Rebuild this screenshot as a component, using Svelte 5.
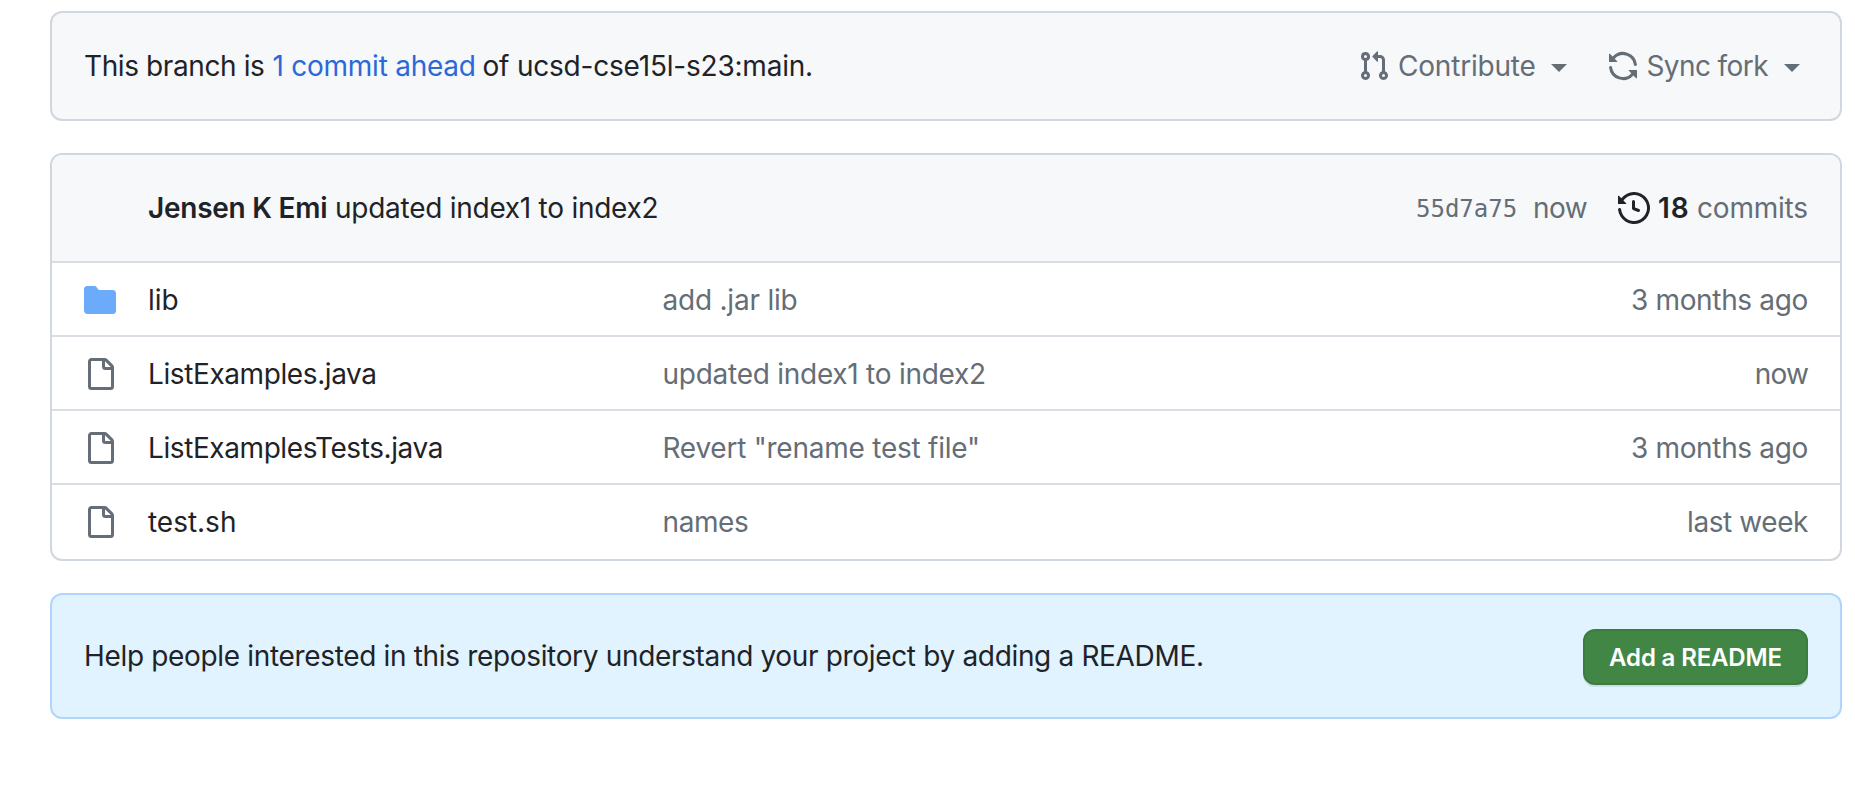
<script>
  const files = [
    { dir: true, name: 'lib', nameLs: 0, msg: 'add .jar lib', msgLs: -0.22, age: '3 months ago', ageLs: -0.34 },
    { dir: false, name: 'ListExamples.java', nameLs: -0.4, msg: 'updated index1 to index2', msgLs: -0.26, age: 'now', ageLs: -0.8 },
    { dir: false, name: 'ListExamplesTests.java', nameLs: -0.41, msg: 'Revert "rename test file"', msgLs: -0.24, age: '3 months ago', ageLs: -0.34 },
    { dir: false, name: 'test.sh', nameLs: -0.02, msg: 'names', msgLs: -0.4, age: 'last week', ageLs: -0.42 }
  ];
</script>

<main>
  <section class="box branch">
    <p class="compare"><span class="lead">This branch is</span><a class="ahead" href="#compare">1 commit ahead</a><span class="base">of ucsd-cse15l-s23:main.</span></p>
    <div class="action contribute">
      <svg class="icon" viewBox="0 0 16 16"><path d="M1.5 3.25a2.25 2.25 0 1 1 3 2.122v5.256a2.251 2.251 0 1 1-1.5 0V5.372A2.25 2.25 0 0 1 1.5 3.25Zm5.677-.177L9.573.677A.25.25 0 0 1 10 .854V2.5h1A2.5 2.5 0 0 1 13.5 5v5.628a2.251 2.251 0 1 1-1.5 0V5a1 1 0 0 0-1-1h-1v1.646a.25.25 0 0 1-.427.177L7.177 3.427a.25.25 0 0 1 0-.354ZM3.75 2.5a.75.75 0 1 0 0 1.5.75.75 0 0 0 0-1.5Zm0 9.5a.75.75 0 1 0 0 1.5.75.75 0 0 0 0-1.5Zm8.25.75a.75.75 0 1 0 1.5 0 .75.75 0 0 0-1.5 0Z" /></svg>
      <span class="label">Contribute</span>
      <i class="caret"></i>
    </div>
    <div class="action sync">
      <svg class="icon" viewBox="0 0 16 16"><path d="M1.705 8.005a.75.75 0 0 1 .834.656 5.5 5.5 0 0 0 9.592 2.97l-1.204-1.204a.25.25 0 0 1 .177-.427h3.646a.25.25 0 0 1 .25.25v3.646a.25.25 0 0 1-.427.177l-1.38-1.38A7.002 7.002 0 0 1 1.05 8.84a.75.75 0 0 1 .656-.834ZM8 2.5a5.487 5.487 0 0 0-4.131 1.869l1.204 1.204A.25.25 0 0 1 4.896 6H1.25A.25.25 0 0 1 1 5.75V2.104a.25.25 0 0 1 .427-.177l1.38 1.38A7.002 7.002 0 0 1 14.95 7.16a.75.75 0 0 1-1.49.178A5.5 5.5 0 0 0 8 2.5Z" /></svg>
      <span class="label">Sync fork</span>
      <i class="caret"></i>
    </div>
  </section>

  <section class="box listing">
    <header>
      <strong class="author">Jensen K Emi</strong>
      <span class="subject">updated index1 to index2</span>
      <span class="hash">55d7a75</span>
      <span class="when">now</span>
      <svg class="icon history" viewBox="0 0 16 16"><path d="m.427 1.927 1.215 1.215a8.002 8.002 0 1 1-1.6 5.685.75.75 0 1 1 1.493-.154 6.5 6.5 0 1 0 1.18-4.458l1.358 1.358A.25.25 0 0 1 3.896 6H.25A.25.25 0 0 1 0 5.75V2.104a.25.25 0 0 1 .427-.177ZM7.75 4a.75.75 0 0 1 .75.75v2.992l2.028.812a.75.75 0 0 1-.557 1.392l-2.5-1A.751.751 0 0 1 7 8.25v-3.5A.75.75 0 0 1 7.75 4Z" /></svg>
      <strong class="count">18</strong>
      <span class="commits">commits</span>
    </header>
    {#each files as f}
      <div class="row">
        {#if f.dir}
          <svg class="icon folder" viewBox="0 0 16 16"><path d="M1.75 1A1.75 1.75 0 0 0 0 2.75v10.5C0 14.216.784 15 1.75 15h12.5A1.75 1.75 0 0 0 16 13.25v-8.5A1.75 1.75 0 0 0 14.25 3H7.5a.25.25 0 0 1-.2-.1l-.9-1.2C6.07 1.26 5.55 1 5 1H1.75Z" /></svg>
        {:else}
          <svg class="icon" viewBox="0 0 16 16"><path d="M2 1.75C2 .784 2.784 0 3.75 0h6.586c.464 0 .909.184 1.237.513l2.914 2.914c.329.328.513.773.513 1.237v9.586A1.75 1.75 0 0 1 13.25 16h-9.5A1.75 1.75 0 0 1 2 14.25Zm1.75-.25a.25.25 0 0 0-.25.25v12.5c0 .138.112.25.25.25h9.5a.25.25 0 0 0 .25-.25V6h-2.75A1.75 1.75 0 0 1 9 4.25V1.5Zm6.75.062V4.25c0 .138.112.25.25.25h2.688l-.011-.013-2.914-2.914-.013-.011Z" /></svg>
        {/if}
        <span class="name" style:letter-spacing="{f.nameLs}px">{f.name}</span>
        <span class="msg" style:letter-spacing="{f.msgLs}px">{f.msg}</span>
        <span class="age" style:letter-spacing="{f.ageLs}px">{f.age}</span>
      </div>
    {/each}
  </section>

  <section class="box readme">
    <p>Help people interested in this repository understand your project by adding a README.</p>
    <button>Add a README</button>
  </section>
</main>

<style>
  :global(body) { background: #fff; }
  main {
    box-sizing: border-box;
    width: 1855px;
    height: 794px;
    padding: 11px 13px 0 50px;
    display: flex;
    flex-direction: column;
    gap: 32px;
    font: 28px/42px Inter, "Liberation Sans", sans-serif;
    color: #1f2328;
    white-space: nowrap;
  }
  .box {
    box-sizing: border-box;
    border: 2px solid #d0d7de;
    border-radius: 12px;
  }
  p { margin: 0; }
  .icon { width: 32px; height: 32px; flex: none; fill: #656d76; display: block; }

  .branch {
    height: 110px;
    display: flex;
    align-items: center;
    padding: 0 32px;
    background: #f6f8fa;
  }
  .compare { display: flex; flex: 1; }
  .lead { width: 188.5px; letter-spacing: -0.4px; }
  .ahead { width: 210px; letter-spacing: -0.25px; color: #2b69d8; text-decoration: none; }
  .base { letter-spacing: -0.21px; }
  .action { display: flex; align-items: center; color: #656d76; }
  .contribute { width: 249px; }
  .contribute .icon { margin-right: 8px; }
  .contribute .label { width: 153px; letter-spacing: -0.2px; }
  .sync { width: 201px; }
  .sync .icon { margin-right: 7.5px; }
  .sync .label { width: 137.5px; letter-spacing: -0.6px; }
  .caret {
    width: 0;
    height: 0;
    margin-top: 4px;
    border: 8px solid transparent;
    border-top-color: #656d76;
    border-bottom: 0;
  }

  .listing { height: 408px; overflow: hidden; }
  header {
    height: 106px;
    display: flex;
    align-items: center;
    padding: 0 32px 0 96px;
    background: #f6f8fa;
  }
  strong { font-weight: 600; }
  .author { width: 187px; letter-spacing: -0.25px; }
  .subject { flex: 1; letter-spacing: -0.26px; }
  .hash {
    width: 117px;
    padding-top: 2px;
    font: 24px/42px "DejaVu Sans Mono", monospace;
    color: #656d76;
  }
  .when { width: 85px; letter-spacing: -0.6px; color: #656d76; }
  .history { fill: #1f2328; }
  .count { width: 39px; margin-left: 8px; letter-spacing: 1px; }
  .commits { width: 111px; letter-spacing: -0.2px; color: #656d76; }

  .row {
    box-sizing: border-box;
    height: 74px;
    display: flex;
    align-items: center;
    padding: 2px 32px 0;
    border-top: 2px solid #d8dee4;
  }
  .row:last-child { height: 76px; padding-top: 0; }
  .folder { fill: #6cabfa; }
  .name { width: 514.5px; margin-left: 32px; }
  .msg { flex: 1; color: #656d76; }
  .age { color: #656d76; }

  .readme {
    height: 126px;
    display: flex;
    align-items: center;
    justify-content: space-between;
    padding: 0 32px;
    background: #e0f3ff;
    border-color: #b0d6fc;
  }
  .readme p { letter-spacing: -0.335px; }
  button {
    box-sizing: border-box;
    width: 225px;
    height: 56px;
    margin: 2px 0 0;
    padding: 1px 0 0;
    border: 2px solid #3d7b41;
    border-radius: 12px;
    background: #428646;
    box-shadow: 0 2px 0 rgba(31, 35, 40, 0.1);
    color: #fff;
    font: 600 24px/40px Inter, "Liberation Sans", sans-serif;
    letter-spacing: -0.15px;
  }
</style>
